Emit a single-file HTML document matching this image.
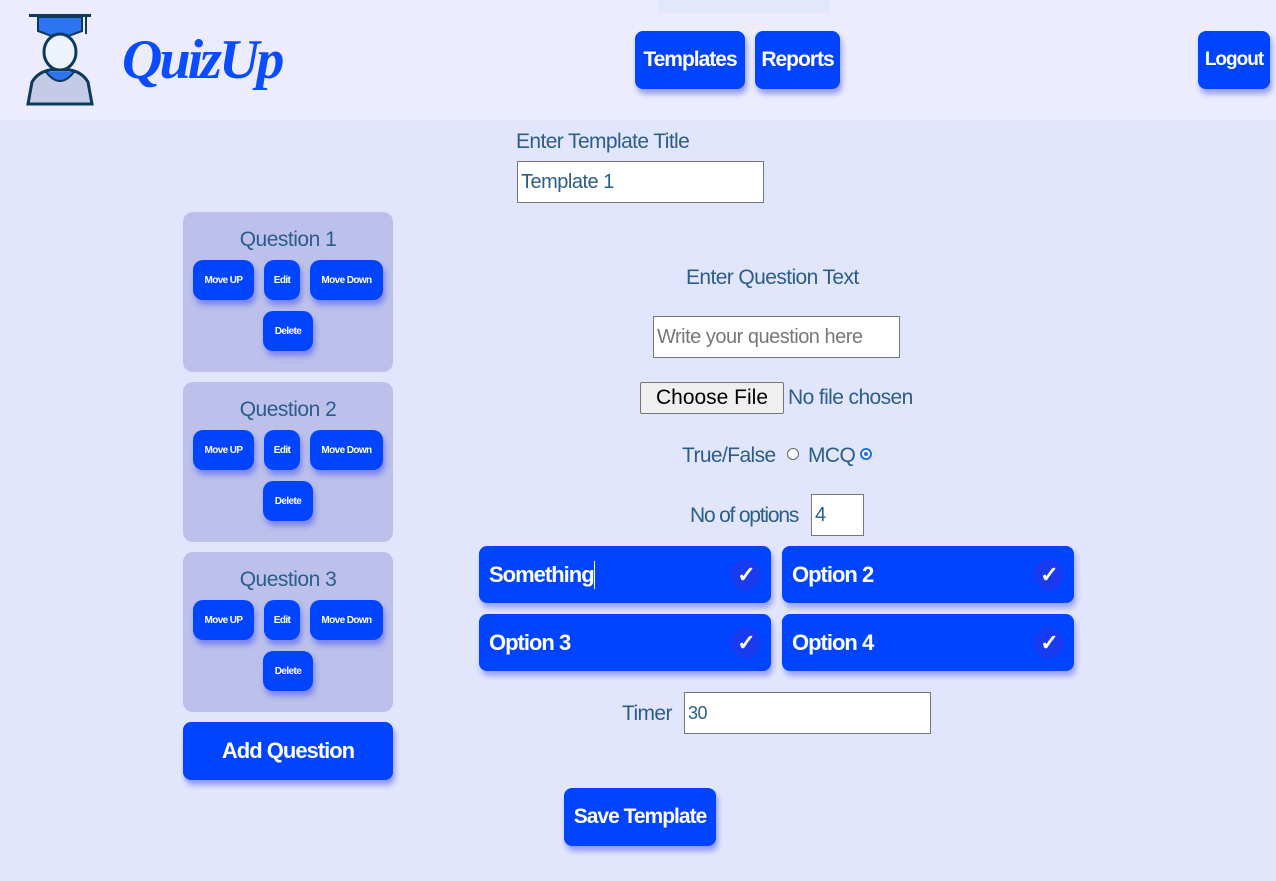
<!DOCTYPE html>
<html><head><meta charset="utf-8"><style>
*{box-sizing:border-box;margin:0;padding:0}
body{width:1276px;height:881px;background:#e2e6fd;font-family:"Liberation Sans Narrow","Liberation Sans",sans-serif;position:relative;overflow:hidden;color:#2b5d8c}
.a{position:absolute;white-space:nowrap}
.hdr{left:0;top:0;width:1276px;height:120px;background:#ececfe}
.btn{position:absolute;background:#0044ff;color:#fff;border-radius:8px;box-shadow:2px 5px 6px rgba(40,60,255,.45);display:flex;align-items:center;justify-content:center;font-weight:bold;letter-spacing:-1px;white-space:nowrap}
.card{position:absolute;left:183px;width:210px;height:160px;background:#bcc0ea;border-radius:10px}
.card .t{position:absolute;width:100%;top:16px;text-align:center;font-size:21px;letter-spacing:-0.5px}
.sb{font-size:10px;border-radius:10px;height:40px;letter-spacing:-0.6px}
.inp{position:absolute;background:#fff;border:1px solid #777;font-size:20px;padding-left:3px;display:flex;align-items:center;color:#2b5d8c;white-space:nowrap;letter-spacing:-0.5px}
.lbl{position:absolute;font-size:21px;white-space:nowrap;letter-spacing:-0.6px}
.opt{position:absolute;width:292px;height:57px;background:#0044ff;border-radius:8px;box-shadow:2px 5px 6px rgba(40,60,255,.4);color:#fff;font-size:22px;font-weight:bold;padding-left:10px;display:flex;align-items:center;letter-spacing:-1px}
.ck{position:absolute;right:10px;top:14px;width:30px;height:30px;border-radius:50%;background:#1a3af0;display:flex;align-items:center;justify-content:center}
</style></head><body>
<div class="a hdr"></div>
<div class="a" style="left:658px;top:0;width:172px;height:13px;background:#e3e7fb"></div>
<svg class="a" style="left:24px;top:12px" width="72" height="96" viewBox="0 0 72 96">
<rect x="5" y="2" width="62" height="3" fill="#0b3a5c"/>
<path d="M14 5h44v14l-22 8-22-8z" fill="#2d74f0" stroke="#0b3a5c" stroke-width="2"/>
<line x1="62" y1="5" x2="62" y2="22" stroke="#0b3a5c" stroke-width="2"/>
<ellipse cx="36" cy="40" rx="16" ry="18" fill="#eef2fb" stroke="#0b3a5c" stroke-width="3"/>
<path d="M4 92 L8 70 Q14 60 26 58 L46 58 Q58 60 64 70 L68 92z" fill="#c5cbe6" stroke="#0b3a5c" stroke-width="3"/>
<path d="M22 60 Q36 78 50 60" fill="#2d74f0" stroke="#0b3a5c" stroke-width="2"/>
</svg>
<div class="a" style="left:122px;top:28px;font-family:'Liberation Serif',serif;font-style:italic;font-weight:bold;font-size:56px;color:#0a4cff;letter-spacing:-3px">QuizUp</div>
<div class="btn" style="left:635px;top:31px;width:110px;height:58px;font-size:21px">Templates</div>
<div class="btn" style="left:755px;top:31px;width:85px;height:58px;font-size:21px">Reports</div>
<div class="btn" style="left:1198px;top:31px;width:72px;height:58px;font-size:19px">Logout</div>

<div class="lbl" style="left:516px;top:130px">Enter Template Title</div>
<div class="inp" style="left:517px;top:161px;width:247px;height:42px">Template 1</div>

<div class="card" style="top:212px"><div class="t">Question 1</div>
<div class="btn sb" style="left:10px;top:48px;width:61px">Move UP</div><div class="btn sb" style="left:81px;top:48px;width:36px">Edit</div><div class="btn sb" style="left:127px;top:48px;width:73px">Move Down</div><div class="btn sb" style="left:80px;top:99px;width:50px">Delete</div></div>
<div class="card" style="top:382px"><div class="t">Question 2</div>
<div class="btn sb" style="left:10px;top:48px;width:61px">Move UP</div><div class="btn sb" style="left:81px;top:48px;width:36px">Edit</div><div class="btn sb" style="left:127px;top:48px;width:73px">Move Down</div><div class="btn sb" style="left:80px;top:99px;width:50px">Delete</div></div>
<div class="card" style="top:552px"><div class="t">Question 3</div>
<div class="btn sb" style="left:10px;top:48px;width:61px">Move UP</div><div class="btn sb" style="left:81px;top:48px;width:36px">Edit</div><div class="btn sb" style="left:127px;top:48px;width:73px">Move Down</div><div class="btn sb" style="left:80px;top:99px;width:50px">Delete</div></div>
<div class="btn" style="left:183px;top:722px;width:210px;height:58px;font-size:22px">Add Question</div>

<div class="lbl" style="left:686px;top:266px">Enter Question Text</div>
<div class="inp" style="left:653px;top:316px;width:247px;height:42px;color:#777">Write your question here</div>
<div class="a" style="left:640px;top:382px;width:144px;height:32px;background:#efefef;border:1px solid #767676;border-radius:2px;font-family:'Liberation Sans',sans-serif;font-size:21px;color:#000;display:flex;align-items:center;justify-content:center">Choose File</div>
<div class="lbl" style="left:788px;top:386px">No file chosen</div>
<div class="lbl" style="left:682px;top:444px">True/False</div>
<div class="a" style="left:787px;top:448px;width:12px;height:12px;border:1px solid #666;border-radius:50%;background:#fff"></div>
<div class="lbl" style="left:808px;top:444px">MCQ</div>
<div class="a" style="left:860px;top:448px;width:12px;height:12px;border:2px solid #1a73e8;border-radius:50%;background:#fff"><div style="margin:2px;width:4px;height:4px;border-radius:50%;background:#1a73e8"></div></div>
<div class="lbl" style="left:690px;top:504px;letter-spacing:-1.2px">No of options</div>
<div class="inp" style="left:811px;top:494px;width:53px;height:42px">4</div>

<div class="opt" style="left:479px;top:546px">Something<span style="display:inline-block;width:1px;height:28px;background:#fff"></span><div class="ck">✓</div></div>
<div class="opt" style="left:782px;top:546px">Option 2<div class="ck">✓</div></div>
<div class="opt" style="left:479px;top:614px">Option 3<div class="ck">✓</div></div>
<div class="opt" style="left:782px;top:614px">Option 4<div class="ck">✓</div></div>

<div class="lbl" style="left:622px;top:702px">Timer</div>
<div class="inp" style="left:684px;top:692px;width:247px;height:42px;font-size:18px">30</div>
<div class="btn" style="left:564px;top:788px;width:152px;height:58px;font-size:21px">Save Template</div>
</body></html>
